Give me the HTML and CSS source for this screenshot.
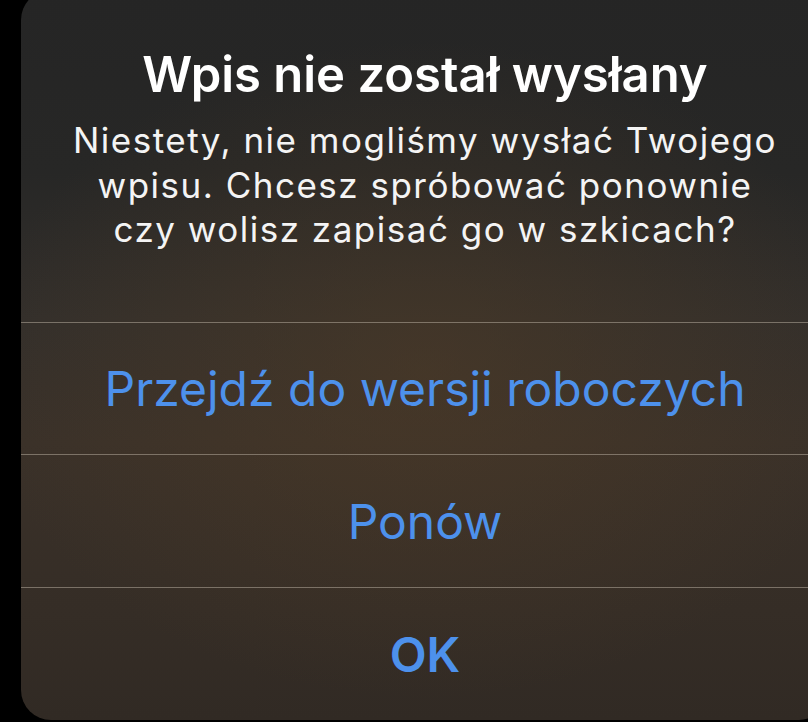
FILE: index.html
```html
<!DOCTYPE html>
<html lang="pl">
<head>
<meta charset="utf-8">
<link rel="stylesheet" href="styles.css">
</head>
<body>
<div class="alert">
  <div class="header">
    <h1 class="title">Wpis nie został wysłany</h1>
    <p class="message">Niestety, nie mogliśmy wysłać Twojego<br>wpisu. Chcesz spróbować ponownie<br>czy wolisz zapisać go w szkicach?</p>
  </div>
  <div class="action">Przejdź do wersji roboczych</div>
  <div class="action">Ponów</div>
  <div class="action bold">OK</div>
</div>
</body>
</html>
```
FILE: styles.css
```css
html, body {
  margin: 0;
  padding: 0;
  background: #000;
  overflow: hidden;
  width: 808px;
  height: 722px;
}
.alert {
  margin: -10px 0 0 21px;
  width: 808px;
  height: 730px;
  border-radius: 30px;
  overflow: hidden;
  display: flex;
  flex-direction: column;
  font-family: Inter, "Noto Sans", sans-serif;
  background:
    radial-gradient(ellipse 55% 45% at 50% 52%, rgba(80,60,38,0.55), rgba(80,60,38,0) 100%),
    linear-gradient(180deg, #252525 0%, #272726 25%, #332f2b 45%, #3a3129 62%, #352d26 85%, #312a24 100%);
}
.header {
  height: 332px;
  box-sizing: border-box;
  padding-top: 57px;
  text-align: center;
  color: #fff;
}
.title {
  margin: 0;
  font-size: 49px;
  line-height: 56px;
  font-weight: 600;
}
.message {
  margin: 15px 0 0;
  font-size: 35px;
  line-height: 44.5px;
  letter-spacing: 1.5px;
  font-weight: 400;
  color: #f4f4f4;
}
.action {
  height: 133px;
  box-sizing: border-box;
  border-top: 1px solid rgba(190,180,165,0.5);
  display: flex;
  align-items: center;
  justify-content: center;
  color: #4d91ec;
  font-size: 48px;
  font-weight: 400;
}
.action.bold {
  font-weight: 600;
}
```
